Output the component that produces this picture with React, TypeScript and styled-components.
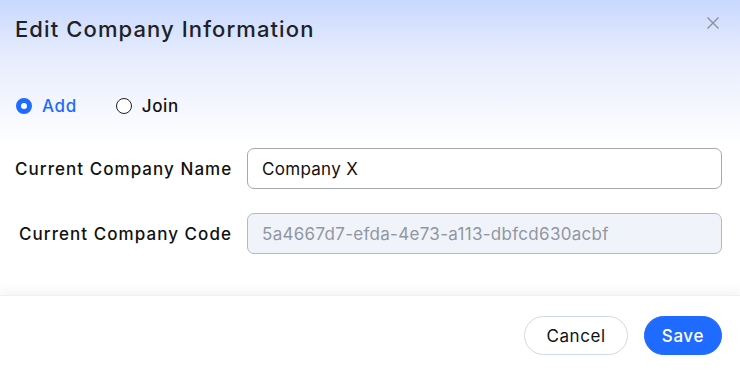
import styled, { createGlobalStyle } from "styled-components";

const GlobalStyle = createGlobalStyle`
  html, body {
    margin: 0;
    padding: 0;
    background: #ffffff;
  }
  body {
    font-family: "Inter", "Noto Sans", sans-serif;
  }
`;

const Modal = styled.div`
  width: 740px;
  height: 370px;
  display: flex;
  flex-direction: column;
  background: linear-gradient(180deg, #c8d8fd 0%, #e6ecfd 55px, #ffffff 145px);
  overflow: hidden;
`;

const Header = styled.div`
  display: flex;
  justify-content: space-between;
  align-items: flex-start;
  padding: 16px 20px 0 15px;
  height: 70px;
  box-sizing: border-box;
`;

const Title = styled.h2`
  margin: 0;
  font-size: 22px;
  font-weight: 500;
  color: #1e2128;
  letter-spacing: 1.1px;
`;

const CloseButton = styled.button`
  border: none;
  background: transparent;
  padding: 0;
  width: 14px;
  height: 14px;
  display: flex;
  cursor: pointer;
`;

const Body = styled.div`
  flex: 1;
  display: flex;
  flex-direction: column;
  padding: 24px 18px 0 15px;
`;

const RadioGroup = styled.div`
  display: flex;
  gap: 38px;
  margin-bottom: 30px;
`;

const RadioLabel = styled.label<{ $active?: boolean }>`
  display: flex;
  align-items: center;
  gap: 10px;
  font-size: 17px;
  font-weight: 500;
  letter-spacing: 0.6px;
  color: ${(p) => (p.$active ? "#1f6bff" : "#111111")};
  height: 24px;
`;

const RadioDot = styled.span<{ $active?: boolean }>`
  width: 16px;
  height: 16px;
  border-radius: 50%;
  box-sizing: border-box;
  margin-left: 1px;
  ${(p) =>
    p.$active
      ? "border: 5px solid #1f6bff; background: #ffffff;"
      : "border: 1.5px solid #222222; background: #ffffff;"}
`;

const Row = styled.div`
  display: flex;
  align-items: center;
  margin-bottom: 24px;
`;

const FieldLabel = styled.div`
  width: 217px;
  text-align: right;
  font-size: 17px;
  font-weight: 500;
  letter-spacing: 1.05px;
  color: #111111;
  margin-right: 15px;
  white-space: nowrap;
`;

const Input = styled.input`
  flex: 1;
  height: 41px;
  box-sizing: border-box;
  border: 1px solid #a5a7b2;
  border-radius: 7px;
  padding: 0 14px;
  font-family: inherit;
  font-size: 17px;
  letter-spacing: 0.3px;
  color: #111111;
  background: #ffffff;
  outline: none;
  &:disabled {
    background: #f0f4fa;
    color: #9196a2;
    border-color: #b4b8c4;
  }
`;

const Footer = styled.div`
  height: 74px;
  display: flex;
  justify-content: flex-end;
  align-items: center;
  gap: 16px;
  padding: 0 18px 0 0;
  background: #ffffff;
  box-shadow: 0 -4px 10px rgba(40, 50, 90, 0.06);
  border-top: 1px solid #eef0f5;
`;

const Button = styled.button<{ $primary?: boolean }>`
  height: 39px;
  border-radius: 20px;
  font-family: inherit;
  font-size: 17px;
  font-weight: ${(p) => (p.$primary ? 500 : 400)};
  letter-spacing: 0.6px;
  padding: 0 ${(p) => (p.$primary ? 17 : 21)}px;
  cursor: pointer;
  margin-top: 5px;
  ${(p) =>
    p.$primary
      ? "background: #1f6bff; color: #ffffff; border: 1px solid #1f6bff;"
      : "background: #ffffff; color: #111111; border: 1px solid #d3d8e6;"}
`;

export default function App() {
  return (
    <>
      <GlobalStyle />
      <Modal>
        <Header>
          <Title>Edit Company Information</Title>
          <CloseButton aria-label="Close">
            <svg width="14" height="14" viewBox="0 0 14 14">
              <path d="M1.5 1.5 L12.5 12.5 M12.5 1.5 L1.5 12.5" stroke="#8a8f9a" strokeWidth="1.3" />
            </svg>
          </CloseButton>
        </Header>
        <Body>
          <RadioGroup>
            <RadioLabel $active>
              <RadioDot $active />
              Add
            </RadioLabel>
            <RadioLabel>
              <RadioDot />
              Join
            </RadioLabel>
          </RadioGroup>
          <Row>
            <FieldLabel>Current Company Name</FieldLabel>
            <Input defaultValue="Company X" />
          </Row>
          <Row>
            <FieldLabel>Current Company Code</FieldLabel>
            <Input disabled defaultValue="5a4667d7-efda-4e73-a113-dbfcd630acbf" />
          </Row>
        </Body>
        <Footer>
          <Button>Cancel</Button>
          <Button $primary>Save</Button>
        </Footer>
      </Modal>
    </>
  );
}
